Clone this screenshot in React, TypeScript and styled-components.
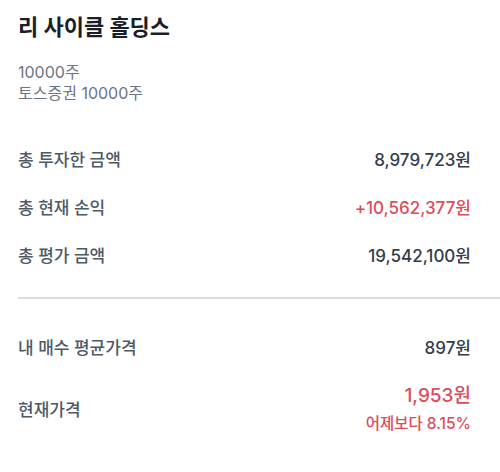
import styled, { createGlobalStyle } from 'styled-components'

const GlobalStyle = createGlobalStyle`
  html, body {
    margin: 0;
    padding: 0;
    background: #ffffff;
  }
  body {
    font-family: Inter, "Noto Sans CJK KR", "Noto Sans", sans-serif;
    -webkit-font-smoothing: antialiased;
  }
`

const Page = styled.div`
  width: 500px;
  padding: 10px 0 0 18px;
  box-sizing: border-box;
`

const Header = styled.div`
  padding-right: 29px;
`

const Title = styled.h1`
  margin: 0;
  font-size: 22px;
  font-weight: 700;
  color: #191f28;
  line-height: 34px;
`

const SubInfo = styled.div`
  margin-top: 18px;
  display: flex;
  flex-direction: column;
  font-size: 16px;
  color: #6b7684;
  line-height: 21px;
`

const Section = styled.div<{ $top: number }>`
  padding: ${(p) => p.$top}px 29px 0 0;
  display: flex;
  flex-direction: column;
  gap: 26px;
`

const Row = styled.div`
  display: flex;
  justify-content: space-between;
  align-items: center;
  min-height: 22px;
`

const Label = styled.span`
  font-size: 17px;
  font-weight: 500;
  color: #4e5968;
  line-height: 22px;
`

const Value = styled.span<{ $red?: boolean; $size?: number }>`
  font-size: ${(p) => p.$size ?? 17}px;
  font-weight: 500;
  color: ${(p) => (p.$red ? '#dc4d5a' : '#333d4b')};
  line-height: 22px;
`

const Divider = styled.hr`
  margin: 30px 0 0;
  border: none;
  height: 2px;
  background: #d9dde1;
`

const PriceBox = styled.div`
  display: flex;
  flex-direction: column;
  align-items: flex-end;
  gap: 7px;
`

const Change = styled.span`
  font-size: 15.5px;
  font-weight: 500;
  color: #dc4d5a;
  line-height: 20px;
`

export default function App() {
  return (
    <>
      <GlobalStyle />
      <Page>
        <Header>
          <Title>리 사이클 홀딩스</Title>
          <SubInfo>
            <span>10000주</span>
            <span>토스증권 10000주</span>
          </SubInfo>
        </Header>
        <Section $top={45}>
          <Row>
            <Label>총 투자한 금액</Label>
            <Value>8,979,723원</Value>
          </Row>
          <Row>
            <Label>총 현재 손익</Label>
            <Value $red>+10,562,377원</Value>
          </Row>
          <Row>
            <Label>총 평가 금액</Label>
            <Value>19,542,100원</Value>
          </Row>
        </Section>
        <Divider />
        <Section $top={38}>
          <Row>
            <Label>내 매수 평균가격</Label>
            <Value>897원</Value>
          </Row>
          <Row>
            <Label>현재가격</Label>
            <PriceBox>
              <Value $red $size={19}>1,953원</Value>
              <Change>어제보다 8.15%</Change>
            </PriceBox>
          </Row>
        </Section>
      </Page>
    </>
  )
}
